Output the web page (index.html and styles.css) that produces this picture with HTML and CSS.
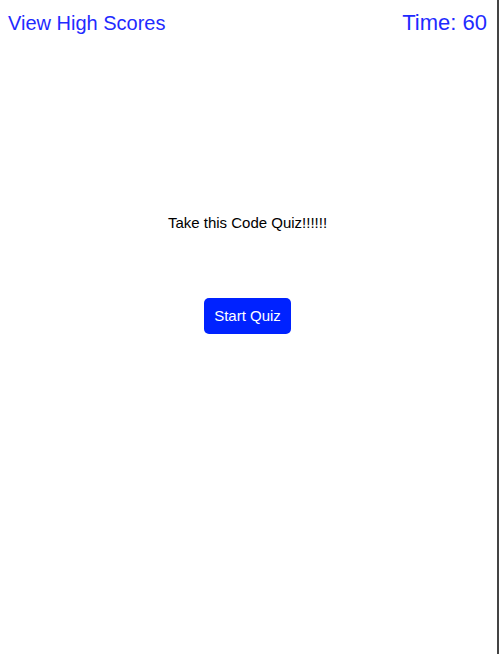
FILE: index.html
```html
<!DOCTYPE html>
<html lang="en">
<head>
<meta charset="utf-8">
<title>Code Quiz</title>
<link rel="stylesheet" href="styles.css">
</head>
<body>
<div class="page">
  <header class="topbar">
    <a class="scores" href="#">View High Scores</a>
    <div class="timer">Time: 60</div>
  </header>
  <main class="intro">
    <p class="title">Take this Code Quiz!!!!!!</p>
    <button class="start">Start Quiz</button>
  </main>
</div>
</body>
</html>
```
FILE: styles.css
```css
html, body {
  margin: 0;
  padding: 0;
}
body {
  font-family: "Liberation Sans", Arial, sans-serif;
  background: #fff;
}
.page {
  width: 499px;
  min-height: 654px;
  box-sizing: border-box;
  border-right: 2px solid #444;
  padding: 0 10px 0 8px;
}
.topbar {
  display: flex;
  justify-content: space-between;
  align-items: baseline;
  padding-top: 11px;
  font-size: 20px;
  line-height: 23px;
}
.scores {
  color: #1f2bff;
  text-decoration: none;
}
.timer {
  color: #1f2bff;
  font-size: 22px;
}
.intro {
  display: flex;
  flex-direction: column;
  align-items: center;
  padding-top: 179px;
}
.title {
  margin: 0;
  font-size: 15px;
  line-height: 18px;
  color: #000;
}
.start {
  margin-top: 66px;
  background: #0022ff;
  color: #fff;
  border: none;
  border-radius: 5px;
  font-family: "Liberation Sans", Arial, sans-serif;
  font-size: 15px;
  padding: 9px 10px;
  line-height: 18px;
}
```
